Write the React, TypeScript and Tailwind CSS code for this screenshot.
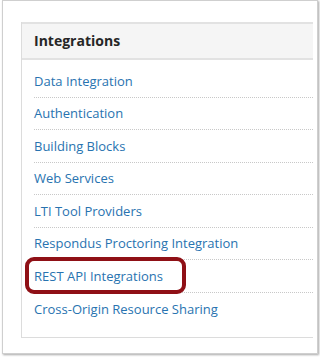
import React from "react";

const items = [
  "Data Integration",
  "Authentication",
  "Building Blocks",
  "Web Services",
  "LTI Tool Providers",
  "Respondus Proctoring Integration",
  "REST API Integrations",
  "Cross-Origin Resource Sharing",
];

export default function App() {
  return (
    <div
      className="w-[320px] h-[358px] bg-white"
      style={{ fontFamily: '"Open Sans", "Noto Sans", sans-serif' }}
    >
      <div className="ml-[2px] w-[316px] h-[354px] border border-[#cfcfcf] bg-white shadow-[1px_1px_2px_rgba(0,0,0,0.35)] pl-[18px] pt-[21px]">
        <div className="w-[292px] border-l border-b border-[#dcdcdc]">
          <div className="h-[38px] border-t-2 border-b-2 border-[#e2e2e2] bg-[#f5f5f5] pl-[12px] flex items-center">
            <span className="text-[14px] font-bold text-[#262626] leading-none">
              Integrations
            </span>
          </div>
          <div className="pl-[12px] pt-[5px] pb-[12px]">
            {items.map((t, i) => (
              <div
                key={t}
                className={
                  "relative h-[32.5px] flex items-center pt-[1px] " +
                  (i < items.length - 1 ? "border-b border-dotted border-[#c8c8c8]" : "")
                }
              >
                <a className="text-[13px] text-[#2873b0] leading-none">{t}</a>
                {t === "REST API Integrations" && (
                  <div className="absolute left-[-9px] top-[-3px] w-[161px] h-[37px] rounded-[9px] border-4 border-[#8f1016]" />
                )}
              </div>
            ))}
          </div>
        </div>
      </div>
    </div>
  );
}
